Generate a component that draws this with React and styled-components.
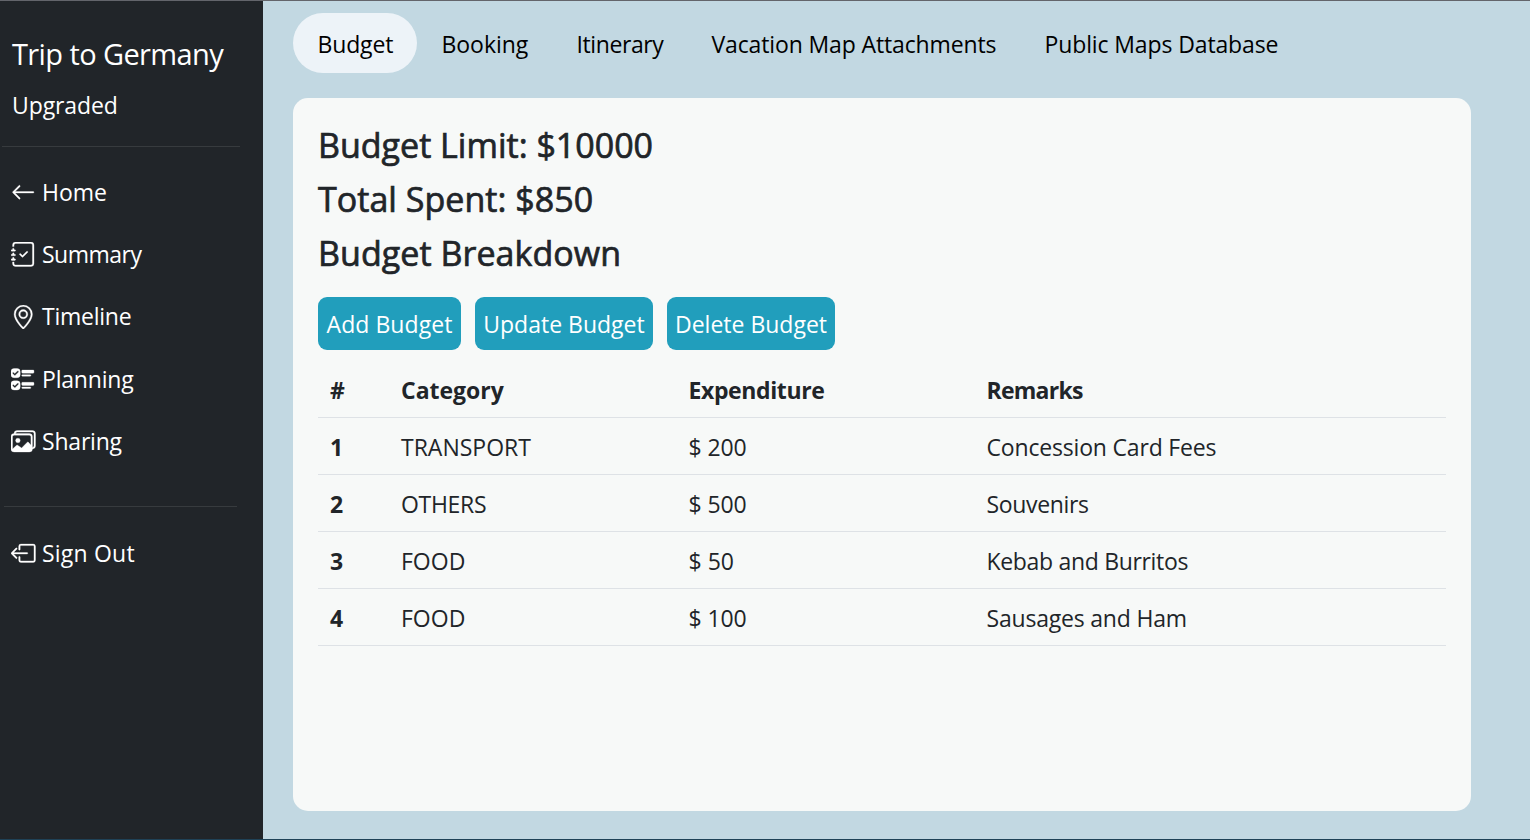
import React from "react";
import styled, { createGlobalStyle } from "styled-components";
import { BsArrowLeft, BsJournalCheck, BsGeoAlt, BsUiChecks, BsImages, BsBoxArrowLeft } from "react-icons/bs";

const Global = createGlobalStyle`
  * { box-sizing: border-box; }
  body { margin: 0; overflow: hidden; font-family: "Open Sans", "Noto Sans", sans-serif; font-size: 23px; color: #212529; }
`;
const Page = styled.div`
  display: flex;
  width: 1530px;
  height: 840px;
  border-top: 1px solid #63656b;
  border-bottom: 1px solid #1f4257;
  background: #c2d8e2;
`;
const Sidebar = styled.aside`
  width: 263px;
  flex: none;
  background: #212529;
  color: #fff;
  padding-top: 33px;
`;
const Label = styled.span`
  white-space: pre;
  letter-spacing: ${(p) => p.$ls || 0}px;
`;
const TripName = styled.div`
  padding-left: 12px;
  height: 42px;
  line-height: 40px;
  font-size: 29px;
`;
const Plan = styled.div`
  padding-left: 12px;
  margin-top: 11px;
  height: 36px;
  line-height: 36px;
`;
const Rule = styled.hr`
  border: 0;
  height: 1px;
  background: #373b3e;
  margin: ${(p) => p.$margin};
`;
const Item = styled.a`
  display: flex;
  align-items: center;
  height: 36px;
  padding-left: 11px;
  gap: 6.5px;
  margin-bottom: 26.25px;
  line-height: 34px;
  svg { flex: none; width: 24.5px; height: 24.5px; stroke: #fff; stroke-width: 0.2px; }
  span { padding-bottom: 0.7px; }
`;
const Main = styled.main`
  flex: 1;
  padding: 12px 59px 0 30px;
`;
const Tabs = styled.nav`
  display: flex;
  height: 60px;
`;
const Tab = styled.a`
  width: ${(p) => p.$w}px;
  flex: none;
  padding-left: 24.5px;
  line-height: 62px;
  border-radius: 30px;
  color: #000;
  background: ${(p) => (p.$active ? "#edf3f8" : "transparent")};
`;
const Card = styled.section`
  margin-top: 25px;
  height: 713px;
  border-radius: 15px;
  background: #f7f9f8;
  padding: 25px;
`;
const Heading = styled.h2`
  margin: 0 0 11px;
  height: 43px;
  line-height: 44px;
  font-size: 34px;
  font-weight: 400;
  -webkit-text-stroke: 0.7px #212529;
`;
const Buttons = styled.div`
  display: flex;
  gap: 14px;
  margin: 23px 0 12px;
`;
const Button = styled.button`
  width: ${(p) => p.$w}px;
  height: 53px;
  border: 0;
  border-radius: 9px;
  padding: 1px 0 0;
  background: #219ebc;
  color: #fff;
  font: inherit;
`;
const Table = styled.table`
  width: 1128px;
  table-layout: fixed;
  border-collapse: separate;
  border-spacing: 0;
`;
const Cell = styled.td`
  height: 57px;
  padding: 2px 0 0 12px;
  text-align: left;
  border-bottom: 1px solid #dee2e6;
  font-weight: ${(p) => (p.$bold ? 700 : 400)};
`;
const HeadCell = styled(Cell)`
  height: 56px;
  padding-top: 1px;
`;

const items = [
  [BsArrowLeft, "Home", 0],
  [BsJournalCheck, "Summary", -0.5],
  [BsGeoAlt, "Timeline", -0.25],
  [BsUiChecks, "Planning", -0.2],
  [BsImages, "Sharing", -0.2],
];
const tabs = [
  ["Budget", 124, -0.15],
  ["Booking", 135, -0.05],
  ["Itinerary", 135, -0.4],
  ["Vacation Map Attachments", 333, -0.13],
  ["Public Maps Database", 282, -0.12],
];
const headings = [["Budget Limit: $10000", 0], ["Total Spent: $850", 0.03], ["Budget Breakdown", 0.05]];
const buttons = [["Add Budget", 143, 0.05], ["Update Budget", 178, 0], ["Delete Budget", 168, 0]];
const columns = [["#", 71, 0], ["Category", 287.5, 0], ["Expenditure", 298, -0.38], ["Remarks", 471.5, -0.75]];
const rows = [
  [["1", 0], ["TRANSPORT", 0], ["$ 200", -0.1], ["Concession Card Fees", -0.18]],
  [["2", 0], ["OTHERS", -0.3], ["$ 500", -0.1], ["Souvenirs", -0.35]],
  [["3", 0], ["FOOD", 0], ["$ 50", 0], ["Kebab and Burritos", -0.32]],
  [["4", 0], ["FOOD", 0], ["$ 100", -0.1], ["Sausages and Ham", -0.2]],
];

export default function App() {
  return (
    <>
      <Global />
      <Page>
        <Sidebar>
          <TripName><Label $ls={-0.6}>Trip to Germany</Label></TripName>
          <Plan><Label $ls={-0.1}>Upgraded</Label></Plan>
          <Rule $margin="23px 23px 27.25px 2px" />
          {items.map(([Icon, text, ls]) => (
            <Item key={text}><Icon /><Label $ls={ls}>{text}</Label></Item>
          ))}
          <Rule $margin="47px 26px 28px 4px" />
          <Item><BsBoxArrowLeft /><Label $ls={0.2}>Sign Out</Label></Item>
        </Sidebar>
        <Main>
          <Tabs>
            {tabs.map(([text, w, ls], i) => (
              <Tab key={text} $w={w} $active={i === 0}><Label $ls={ls}>{text}</Label></Tab>
            ))}
          </Tabs>
          <Card>
            {headings.map(([text, ls]) => (
              <Heading key={text}><Label $ls={ls}>{text}</Label></Heading>
            ))}
            <Buttons>
              {buttons.map(([text, w, ls]) => (
                <Button key={text} $w={w}><Label $ls={ls}>{text}</Label></Button>
              ))}
            </Buttons>
            <Table>
              <colgroup>{columns.map(([t, w]) => <col key={t} width={w} />)}</colgroup>
              <thead>
                <tr>{columns.map(([t, , ls]) => <HeadCell as="th" key={t} $bold><Label $ls={ls}>{t}</Label></HeadCell>)}</tr>
              </thead>
              <tbody>
                {rows.map((row) => (
                  <tr key={row[0][0]}>
                    {row.map(([t, ls], i) => <Cell key={i} $bold={i === 0}><Label $ls={ls}>{t}</Label></Cell>)}
                  </tr>
                ))}
              </tbody>
            </Table>
          </Card>
        </Main>
      </Page>
    </>
  );
}
